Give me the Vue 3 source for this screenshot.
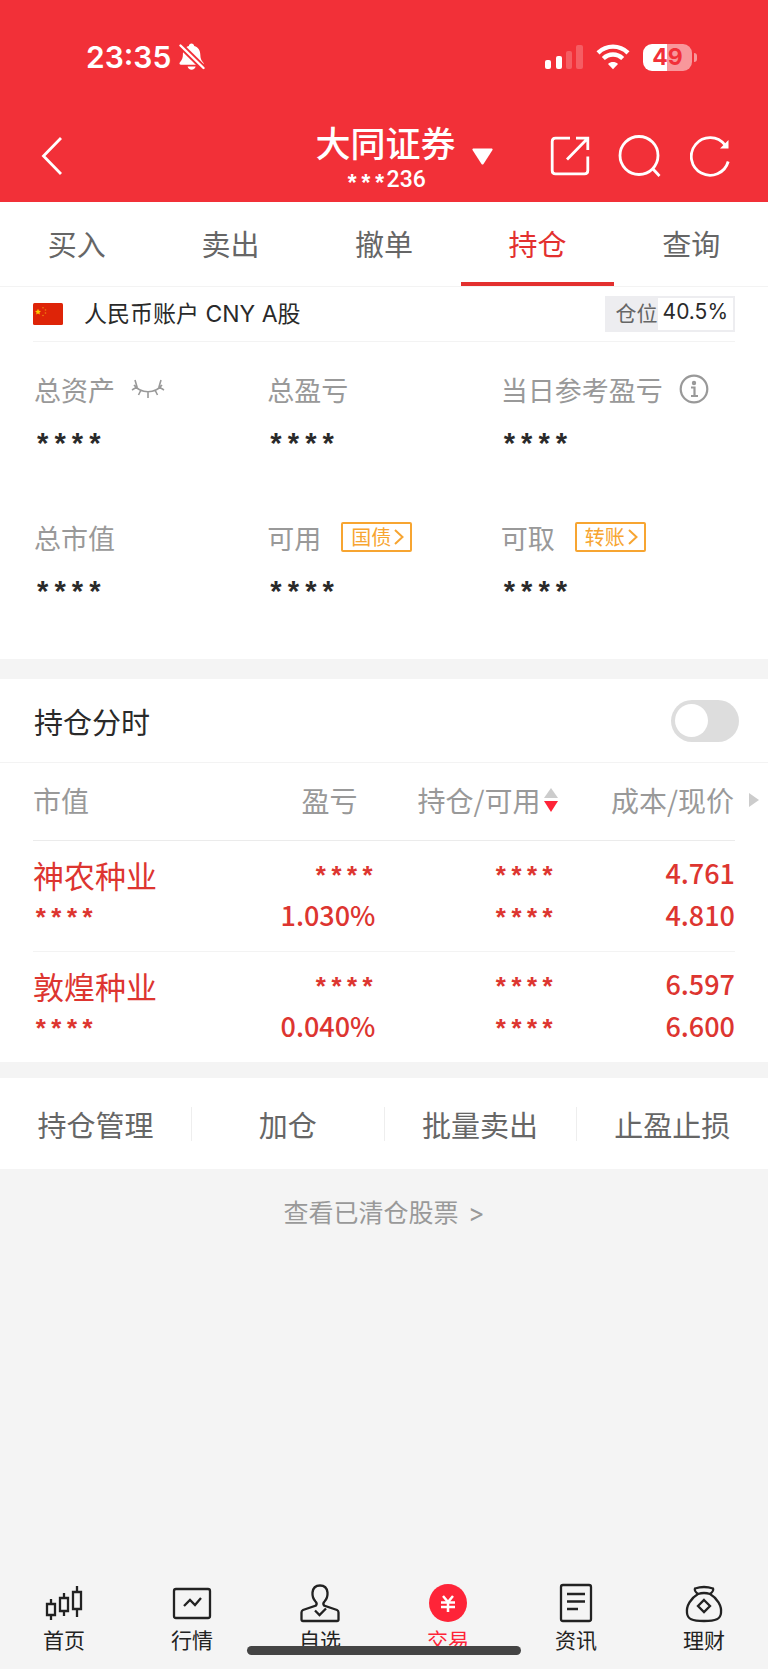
<template>
    <div class="page">
        <header class="header">
            <!-- 状态栏 -->
            <div class="status-bar">
                <div class="status-left">
                    <span class="time">23:35</span>
                    <svg width="26" height="28" viewBox="0 0 26 28" fill="#fff">
                        <path d="M12.500.5c1.500 0 2.500.9 2.700 2.400 4.300 1.200 6 4.500 6.100 8.600.1 4 1 6 2.900 7.900 1 1.200.5 2.400-1 2.400H2c-1.500 0-2-1.500-1-2.600 2-2.200 2.900-4.200 2.900-7.700.1-4.100 1.700-7.400 5.900-8.600C10 1.400 11 .5 12.500.5zM8.600 23.600h8c-.3 1.900-2 3.200-4 3.200s-3.700-1.300-4-3.200z" />
                        <path d="M1.500 2.500 24.500 25" stroke="#f23038" stroke-width="6" />
                        <path d="M1.500 2.500 24.500 25" stroke="#fff" stroke-width="2.400" stroke-linecap="round" />
                    </svg>
                </div>
                <div class="status-right">
                    <svg width="38" height="26" viewBox="0 0 38 26" fill="#fff">
                        <rect x="0" y="16" width="6" height="9" rx="2" />
                        <rect x="11" y="12" width="6" height="13" rx="2" />
                        <rect x="21" y="7" width="6" height="18" rx="2" opacity=".22" />
                        <rect x="31" y="1" width="7" height="24" rx="2" opacity=".22" />
                    </svg>
                    <svg width="34" height="26" viewBox="0 0 34 26" fill="none" stroke="#fff" stroke-width="4.400">
                        <path d="M2 8.800c8.600-8.200 21.400-8.200 30 0" />
                        <path d="M7.300 14.500c5.700-5.300 13.700-5.300 19.400 0" />
                        <path d="M17 25.200l-5-5.200c2.900-2.600 7.100-2.600 10 0z" fill="#fff" stroke="none" />
                    </svg>
                    <span class="battery">49</span>
                </div>
            </div>
            <!-- 标题栏 -->
            <div class="nav-bar">
                <button class="icon-btn back" aria-label="返回">
                    <svg width="22" height="38" viewBox="0 0 22 38" fill="none" stroke="#fff" stroke-width="2.800"><path d="M20 1 2.500 19 20 37" /></svg>
                </button>
                <button class="account-switch">
                    <span class="broker">
                        <span class="broker-name">大同证券</span>
                        <span class="broker-no"><span class="mask">***</span>236</span>
                    </span>
                    <svg class="caret" width="21" height="17" viewBox="0 0 21 17" fill="#fff"><path d="M1 .5h19q1 .5.5 1.500L11.500 16q-1 1-2 0L.5 2Q0 1 1 .5z" /></svg>
                </button>
                <div class="nav-actions">
                    <button class="icon-btn" aria-label="分享">
                        <svg width="40" height="40" viewBox="0 0 40 40" fill="none" stroke="#fff" stroke-width="2.800">
                            <path d="M20 2.200H5.500Q2.200 2.200 2.200 5.500v29q0 3.300 3.300 3.300h29q3.300 0 3.300-3.300V20.500M26 2.200h11.800V14M37.500 2.500 17 23.500" />
                        </svg>
                    </button>
                    <button class="icon-btn" aria-label="搜索">
                        <svg width="44" height="42" viewBox="0 0 44 42" fill="none" stroke="#fff" stroke-width="2.800">
                            <circle cx="21" cy="20.500" r="19" /><path d="M34.500 33.500 41.500 41" />
                        </svg>
                    </button>
                    <button class="icon-btn" aria-label="刷新">
                        <svg width="40" height="42" viewBox="0 0 40 42" fill="none" stroke="#fff" stroke-width="2.800">
                            <path d="M38.200 26.500A18.800 18.800 0 1 1 35 10" /><path d="M38.500 5v8.500H30z" fill="#fff" stroke="none" />
                        </svg>
                    </button>
                </div>
            </div>
        </header>

        <!-- 交易菜单 -->
        <nav class="tabs">
            <button v-for="tab in tabs" :key="tab" class="tab" :class="{ active: tab === activeTab }" @click="activeTab = tab">{{ tab }}</button>
        </nav>

        <!-- 资产 -->
        <section class="panel">
            <div class="account">
                <svg width="30" height="22" viewBox="0 0 30 22">
                    <rect width="30" height="22" rx="1.500" fill="#de2408" />
                    <path d="M5 5.800l.9 2 2.100.2-1.600 1.400.5 2.100L5 10.400l-1.900 1.100.5-2.100L2 8l2.100-.2z" fill="#ffc800" />
                    <g fill="#f08010"><circle cx="10" cy="4.800" r=".8" /><circle cx="12.500" cy="7" r=".8" /><circle cx="12.500" cy="10" r=".8" /><circle cx="10" cy="12.500" r=".8" /></g>
                </svg>
                <span class="account-name">人民币账户 CNY A股</span>
                <div class="position">
                    <span class="position-label">仓位</span>
                    <span class="position-value">40.5%</span>
                </div>
            </div>
            <div class="summary">
                <div class="summary-item" v-for="item in summary" :key="item.label">
                    <div class="summary-label">
                        <span>{{ item.label }}</span>
                        <button v-if="item.icon === 'eye'" class="icon-btn eye" aria-label="显示金额">
                            <svg width="34" height="20" viewBox="0 0 34 20" fill="none" stroke="#999" stroke-width="1.600">
                                <path d="M3 6c7 9 21 9 28 0M4 1l2 7-5 3M30 1l-2 7 5 3M10 11l-2.500 5M17 12.500V19M24 11l2.500 5" />
                            </svg>
                        </button>
                        <button v-if="item.icon === 'info'" class="icon-btn info" aria-label="说明">
                            <svg width="30" height="30" viewBox="0 0 30 30" fill="none" stroke="#999" stroke-width="2.200">
                                <circle cx="15" cy="15" r="13.300" /><circle cx="15" cy="9" r="2.200" fill="#999" stroke="none" /><path d="M12 13.500h3.500V22M12 22h7" />
                            </svg>
                        </button>
                        <button v-if="item.action" class="mini-btn">
                            {{ item.action }}
                            <svg width="10" height="16" viewBox="0 0 10 16" fill="none" stroke="#f7a531" stroke-width="2"><path d="M1 1l7.500 7L1 15" /></svg>
                        </button>
                    </div>
                    <div class="summary-value">****</div>
                </div>
            </div>
        </section>

        <!-- 持仓列表 -->
        <section class="panel holdings">
            <label class="switch-row">
                <span>持仓分时</span>
                <input type="checkbox" class="switch" v-model="showChart" />
            </label>
            <table class="stocks">
                <thead>
                    <tr>
                        <th class="col-name">市值</th>
                        <th class="col-profit">盈亏</th>
                        <th class="col-hold">
                            <span class="sort">持仓/可用
                                <svg width="14" height="24" viewBox="0 0 14 24"><path d="M7 0l7 10H0z" fill="#ccc" /><path d="M0 13h14L7 24z" fill="#fe2438" /></svg>
                            </span>
                        </th>
                        <th class="col-cost">
                            <span class="more">成本/现价
                                <svg width="10" height="14" viewBox="0 0 10 14"><path d="M0 0l10 7-10 7z" fill="#ccc" /></svg>
                            </span>
                        </th>
                    </tr>
                </thead>
                <tbody>
                    <tr v-for="stock in stocks" :key="stock.name">
                        <td class="col-name">
                            <div class="stock-name">{{ stock.name }}</div>
                            <div class="line masked">****</div>
                        </td>
                        <td>
                            <div class="line masked">****</div>
                            <div class="line">{{ stock.rate }}</div>
                        </td>
                        <td>
                            <div class="line masked">****</div>
                            <div class="line masked">****</div>
                        </td>
                        <td>
                            <div class="line">{{ stock.cost }}</div>
                            <div class="line">{{ stock.price }}</div>
                        </td>
                    </tr>
                </tbody>
            </table>
        </section>

        <div class="actions">
            <button v-for="action in actions" :key="action" class="action">{{ action }}</button>
        </div>
        <a href="#" class="cleared">查看已清仓股票 <span class="arrow">&gt;</span></a>

        <!-- 底部导航 -->
        <nav class="tab-bar">
            <a v-for="item in menus" :key="item.name" href="#" class="menu" :class="{ current: item.name === '交易' }">
                <svg width="40" height="40" viewBox="0 0 40 40" fill="none" stroke="#222" stroke-width="2.300" v-html="item.icon"></svg>
                <span>{{ item.name }}</span>
            </a>
            <div class="home-indicator"></div>
        </nav>
    </div>
</template>

<script setup>
import { ref } from 'vue'

const tabs = ['买入', '卖出', '撤单', '持仓', '查询']
const activeTab = ref('持仓')
const showChart = ref(false)

const summary = [
    { label: '总资产', icon: 'eye' },
    { label: '总盈亏' },
    { label: '当日参考盈亏', icon: 'info' },
    { label: '总市值' },
    { label: '可用', action: '国债' },
    { label: '可取', action: '转账' }
]

const stocks = [
    { name: '神农种业', rate: '1.030%', cost: '4.761', price: '4.810' },
    { name: '敦煌种业', rate: '0.040%', cost: '6.597', price: '6.600' }
]

const actions = ['持仓管理', '加仓', '批量卖出', '止盈止损']

const menus = [
    { name: '首页', icon: '<path d="M3 21h8v11H3zM7 16v5M7 32v5M16 15h8v13h-8zM20 10v5M20 28v5M29 9h8v17h-8zM33 3v6M33 26v8" />' },
    { name: '行情', icon: '<rect x="2" y="6" width="36" height="29" rx="2" /><path d="M12 23l6-6 5 5 6-7" />' },
    { name: '自选', icon: '<path d="M16 22.500q1.500-2-.5-4c-2-2.200-3.300-5-3-9C13 5 16 2.500 20 2.500s7 2.500 7.500 7c.3 4-1 6.800-3 9q-2 2-.5 4L37 27q1.500.7 1.500 2.500v7q0 1.500-1.500 1.500H3q-1.500 0-1.500-1.500v-7Q1.500 27.700 3 27z" /><path d="M15 27.500l4.500 4.500L26 25.500" />' },
    { name: '交易', icon: '<circle cx="20" cy="20" r="19" fill="#fe2438" stroke="none" /><path d="M15 13l5 6 5-6M13 19.500h14M13 24h14M20 19v10" stroke="#fff" stroke-width="2.500" />' },
    { name: '资讯', icon: '<rect x="5" y="2" width="30" height="36" rx="2" /><path d="M11 11h18M11 18.500h18M11 26h11" />' },
    { name: '理财', icon: '<path d="M14 11q-4-3-3-5.500Q20 2.500 29 5.500 30 8 26 11" /><path d="M14 11q6-2 12 0c7 4 12 12 11 19-.5 6-5 8-17 8S3.500 36 3 30C2 23 7 15 14 11z" /><path d="M20 17l6 6-6 6-6-6z" />' }
]
</script>

<style>
body {
    background-color: #f4f4f4;
}
</style>

<style scoped>
.page {
    min-height: 100vh;
    display: flex;
    flex-direction: column;
    font-family: "Noto Sans CJK SC", sans-serif;
    color: #2a2a2a;
}

button {
    border: 0;
    padding: 0;
    background: none;
    font: inherit;
    color: inherit;
}

svg {
    display: block;
    flex-shrink: 0;
}

a {
    text-decoration: none;
}

/* 头部 */
.header {
    background-color: #f23038;
    color: #fff;
}

.status-bar {
    display: flex;
    justify-content: space-between;
    align-items: center;
    height: 112px;
    padding: 2px 71px 0 86px;
    box-sizing: border-box;
}

.status-left {
    display: flex;
    align-items: center;
    gap: 8px;
}

.time {
    font: 600 30px/40px Inter, sans-serif;
}

.status-right {
    display: flex;
    align-items: center;
    gap: 13px;
}

.battery {
    position: relative;
    width: 49px;
    height: 27px;
    margin-right: 5px;
    border-radius: 9px;
    background: linear-gradient(90deg, #fff 50%, #f8979b 50%);
    color: #f23038;
    font: 700 23px/27px Inter, sans-serif;
    text-align: center;
}

.battery::after {
    content: "";
    position: absolute;
    right: -5px;
    top: 9px;
    width: 3px;
    height: 9px;
    border-radius: 0 4px 4px 0;
    background-color: #f8979b;
}

.nav-bar {
    display: grid;
    grid-template-columns: 1fr auto 1fr;
    align-items: center;
    height: 90px;
    padding: 0 38px 4px 41px;
    box-sizing: border-box;
}

.account-switch {
    display: flex;
    align-items: center;
    gap: 16px;
    margin-left: 37px;
}

.broker {
    display: flex;
    flex-direction: column;
    align-items: center;
    padding-top: 8px;
}

.broker-name {
    font-size: 35px;
    line-height: 44px;
    font-weight: 500;
}

.broker-no {
    display: flex;
    height: 36px;
    font: 500 23px/31px Roboto, sans-serif;
}

.broker-no .mask {
    font: 700 23px/44px "Liberation Mono", monospace;
}

.nav-actions {
    display: flex;
    align-items: center;
    justify-content: flex-end;
    gap: 28px;
}

/* 菜单 */
.tabs {
    display: flex;
    background-color: #fff;
    border-bottom: 1px solid #f3f3f3;
}

.tab {
    flex: 1;
    height: 84px;
    border-top: 2px solid transparent;
    border-bottom: 4px solid transparent;
    font-size: 29px;
    color: #666;
}

.tab.active {
    border-bottom-color: #e3302f;
    color: #e3302f;
}

/* 资产 */
.panel {
    background-color: #fff;
}

.account {
    display: flex;
    align-items: center;
    height: 54px;
    margin: 0 33px;
    border-bottom: 1px solid #f3f3f3;
}

.account-name {
    margin-left: 21px;
    font-family: Inter, "Noto Sans CJK SC", sans-serif;
    font-size: 23px;
    line-height: 32px;
}

.position {
    display: flex;
    height: 32px;
    margin-left: auto;
    border: 2px solid #ededf0;
    line-height: 28px;
}

.position-label {
    padding-left: 9px;
    background-color: #ededf0;
    font-size: 21px;
    color: #666;
}

.position-value {
    padding: 0 5px;
    font-family: Inter, sans-serif;
    font-size: 21px;
}

.summary {
    display: grid;
    grid-template-columns: repeat(3, 1fr);
    padding: 28px 34px 0;
}

.summary-item {
    height: 148px;
}

.summary-item:nth-child(n + 4) {
    height: 141px;
}

.summary-label {
    display: flex;
    align-items: center;
    height: 38px;
    font-size: 27px;
    color: #999;
    white-space: nowrap;
}

.eye {
    margin-left: 16px;
}

.info {
    margin-left: 16px;
}

.mini-btn {
    display: flex;
    align-items: center;
    gap: 3px;
    height: 30px;
    margin-left: 20px;
    padding: 0 6px 0 8px;
    border: 2px solid #f7a531;
    border-radius: 2px;
    font-size: 20px;
    line-height: 26px;
    color: #f7a531;
}

.summary-value {
    padding-top: 20px;
    font: 700 29px/40px "Liberation Mono", monospace;
}

/* 持仓 */
.holdings {
    margin-top: 20px;
}

.switch-row {
    display: flex;
    justify-content: space-between;
    align-items: center;
    height: 83px;
    padding: 0 29px 0 34px;
    border-bottom: 1px solid #f3f3f3;
    font-size: 29px;
}

.switch {
    appearance: none;
    display: flex;
    align-items: center;
    width: 68px;
    height: 42px;
    margin: 0;
    padding: 0 4px;
    border-radius: 21px;
    background-color: #ddd;
}

.switch::before {
    content: "";
    width: 33px;
    height: 33px;
    border-radius: 50%;
    background-color: #fff;
}

.switch:checked {
    justify-content: flex-end;
    background-color: #e3302f;
}

.stocks {
    width: calc(100% - 66px);
    margin: 0 33px;
    border-collapse: collapse;
    table-layout: fixed;
}

.stocks th {
    height: 73px;
    padding: 0 0 4px;
    border-bottom: 1px solid #ebebeb;
    font-size: 28px;
    font-weight: 400;
    color: #999;
    text-align: right;
    white-space: nowrap;
}

.stocks .col-name {
    width: 24%;
    text-align: left;
}

.stocks .col-profit {
    width: 174px;
    padding-right: 18px;
    box-sizing: border-box;
}

.stocks .col-hold {
    width: 180px;
}

.sort,
.more {
    display: inline-flex;
    align-items: center;
    gap: 4px;
    margin-right: -3px;
}

.more {
    gap: 15px;
    margin-right: -24px;
}

.stocks td {
    height: 110px;
    padding: 11px 0 15px;
    box-sizing: border-box;
    border-bottom: 1px solid #f3f3f3;
    color: #dd3530;
    text-align: right;
    vertical-align: top;
}

.stocks tr:last-child td {
    border-bottom: 0;
}

.stock-name {
    height: 42px;
    font-size: 31px;
    line-height: 46px;
}

.line {
    height: 42px;
    font: 500 27px/42px "Noto Sans CJK SC", sans-serif;
}

.line.masked {
    font: 700 26px/52px "Liberation Mono", monospace;
}

.actions {
    display: flex;
    margin-top: 16px;
    padding: 29px 0 28px;
    background-color: #fff;
}

.action {
    flex: 1;
    height: 34px;
    font-size: 29px;
    line-height: 34px;
    color: #666;
}

.action + .action {
    border-left: 1px solid #eee;
}

.cleared {
    align-self: center;
    margin-top: 24px;
    font-size: 25px;
    line-height: 36px;
    color: #999;
}

.arrow {
    margin-left: 4px;
    font-family: Inter, sans-serif;
}

/* 底部 */
.tab-bar {
    position: relative;
    display: flex;
    margin-top: auto;
    padding-bottom: 15px;
}

.menu {
    flex: 1;
    display: flex;
    flex-direction: column;
    align-items: center;
    gap: 1px;
    font-size: 21px;
    line-height: 30px;
    color: #222;
}

.menu.current {
    color: #fe2438;
}

.home-indicator {
    position: absolute;
    left: 50%;
    bottom: 14px;
    width: 274px;
    height: 9px;
    margin-left: -137px;
    border-radius: 5px;
    background-color: #444;
}
</style>
